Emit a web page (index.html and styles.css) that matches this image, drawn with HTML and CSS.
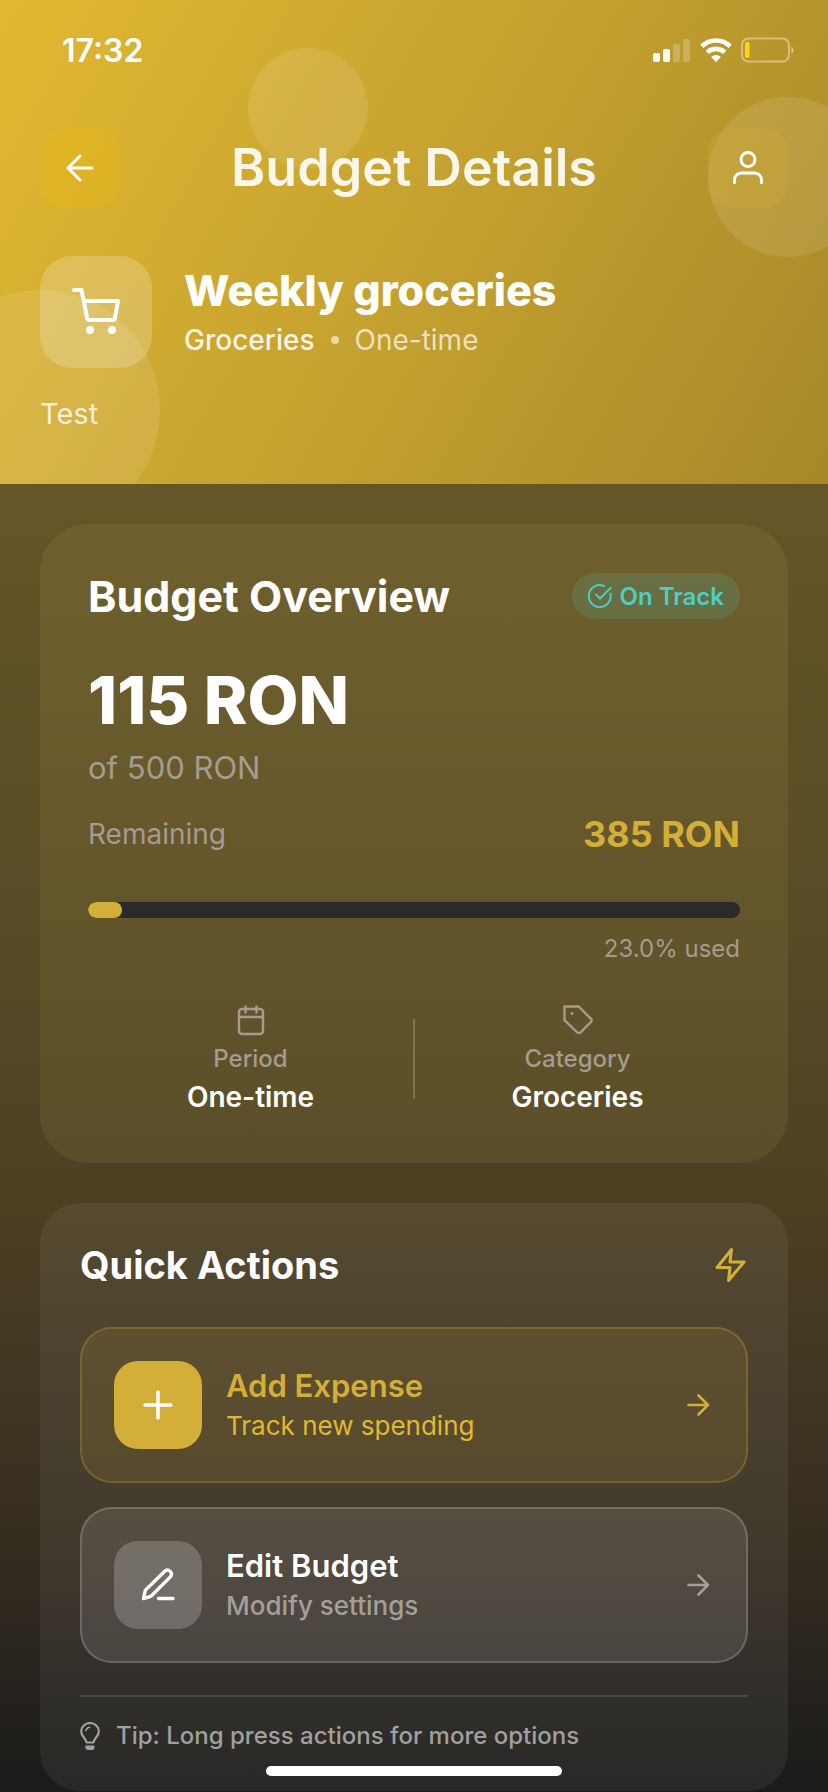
FILE: index.html
```html
<!DOCTYPE html>
<html lang="en">
<head>
<meta charset="utf-8">
<meta name="viewport" content="width=device-width, initial-scale=1">
<title>Budget Details</title>
<link rel="stylesheet" href="styles.css">
</head>
<body>
<header class="hero">
  <span class="bubble bubble-top"></span>
  <span class="bubble bubble-right"></span>
  <span class="bubble bubble-left"></span>
  <div class="status">
    <time class="clock">17:32</time>
    <div class="status-icons">
      <svg width="38" height="26" viewBox="0 0 38 26" fill="#fff"><rect x="0" y="16" width="7" height="9" rx="2"/><rect x="10" y="12" width="7" height="13" rx="2"/><rect x="20" y="7" width="7" height="18" rx="2" opacity=".22"/><rect x="30" y="2" width="7" height="23" rx="2" opacity=".22"/></svg>
      <svg width="32" height="26" viewBox="0 0 32 26"><g fill="none" stroke="#fff" stroke-width="4.6"><path d="M1.8 9.4a20.2 20.2 0 0 1 28.4 0"/><path d="M7.3 15.4a12.6 12.6 0 0 1 17.4 0"/></g><path fill="#fff" d="M16 25l-4.9-5a7.2 7.2 0 0 1 9.8 0z"/></svg>
      <svg width="54" height="26" viewBox="0 0 54 26"><rect x="1" y="1.500" width="47" height="23" rx="6.500" fill="none" stroke="#fff" stroke-opacity=".4" stroke-width="2"/><rect x="4" y="5" width="4.500" height="16" rx="1.800" fill="#ffd60a"/><path d="M50.500 9.500a4.600 4.600 0 0 1 0 7.500z" fill="#fff" opacity=".5"/></svg>
    </div>
  </div>
  <nav class="nav">
    <button class="nav-btn" type="button" aria-label="Back">
      <svg width="40" height="40" viewBox="0 0 40 40" fill="none" stroke="currentColor" stroke-width="3" stroke-linecap="round" stroke-linejoin="round"><path d="M32 20H8M20 32L8 20L20 8"/></svg>
    </button>
    <h1 class="title">Budget Details</h1>
    <button class="nav-btn nav-btn-soft" type="button" aria-label="Profile">
      <svg width="40" height="40" viewBox="0 0 40 40" fill="none" stroke="currentColor" stroke-width="3" stroke-linecap="round" stroke-linejoin="round"><circle cx="20" cy="11.500" r="7"/><path d="M6.500 34.500V32a7 7 0 0 1 7-7H26.500a7 7 0 0 1 7 7v2.500"/></svg>
    </button>
  </nav>
  <div class="budget">
    <div class="budget-icon">
      <svg width="56" height="56" viewBox="0 0 56 56" fill="none" stroke="#fff" stroke-width="4" stroke-linecap="round" stroke-linejoin="round"><path d="M6 6h7.500l5.700 28.500a2 2 0 0 0 2 1.500h23.600a2 2 0 0 0 2-1.600L50 17H15.500"/><g fill="#fff" stroke="none"><circle cx="22" cy="46" r="4"/><circle cx="44" cy="46" r="4"/></g></svg>
    </div>
    <div class="budget-text">
      <h2 class="budget-name">Weekly groceries</h2>
      <div class="meta"><span class="meta-cat">Groceries</span><span class="dot"></span><span class="meta-period">One-time</span></div>
    </div>
  </div>
  <p class="note">Test</p>
</header>
<main class="content">
  <section class="card overview">
    <div class="row">
      <h2 class="heading">Budget Overview</h2>
      <span class="badge"><svg width="24" height="24" viewBox="0 0 24 24" fill="none" stroke="currentColor" stroke-width="2" stroke-linecap="round" stroke-linejoin="round"><path d="M22.500 9.800A11 11 0 1 1 16 2M8 10.500l4 4L22.500 4"/></svg>On Track</span>
    </div>
    <p class="amount">115 RON</p>
    <p class="total">of 500 RON</p>
    <div class="row remaining"><span class="remaining-label">Remaining</span><strong class="remaining-value">385 RON</strong></div>
    <div class="bar" role="progressbar" aria-valuenow="23" aria-valuemin="0" aria-valuemax="100" aria-label="Budget used"><div class="bar-fill" style="width:5.2%"></div></div>
    <p class="used">23.0% used</p>
    <div class="stats">
      <div class="stat">
        <svg width="36" height="36" viewBox="0 0 36 36" fill="none" stroke="currentColor" stroke-width="2.400" stroke-linecap="round" stroke-linejoin="round"><rect x="6" y="7" width="24" height="25" rx="3"/><path d="M6 15h24M12.500 4.500v6M23.500 4.500v6"/></svg>
        <span class="stat-label">Period</span><span class="stat-value">One-time</span>
      </div>
      <span class="rule"></span>
      <div class="stat">
        <svg width="36" height="36" viewBox="0 0 36 36" fill="none" stroke="currentColor" stroke-width="2.400" stroke-linecap="round" stroke-linejoin="round"><path d="M4.500 4.500h14.200L30.800 16.600a2.600 2.600 0 0 1 0 3.600L20.600 30.300a2.400 2.400 0 0 1-3.400 0L4.500 18.200z"/><circle cx="12" cy="11.500" r="1.500" fill="currentColor" stroke="none"/></svg>
        <span class="stat-label">Category</span><span class="stat-value">Groceries</span>
      </div>
    </div>
  </section>
  <section class="card actions">
    <div class="row">
      <h2 class="heading heading-small">Quick Actions</h2>
      <svg class="zap" width="36" height="36" viewBox="0 0 36 36" fill="none" stroke="currentColor" stroke-width="3" stroke-linecap="round" stroke-linejoin="round"><path d="M19.500 2.500L5 20.500h13L16.500 33.500L32 15H18z"/></svg>
    </div>
    <div class="list">
      <button class="action action-gold" type="button">
        <span class="action-icon"><svg width="40" height="40" viewBox="0 0 40 40" fill="none" stroke="#fff" stroke-width="3.500" stroke-linecap="round"><path d="M20 7v26M7 20h26"/></svg></span>
        <span class="action-text"><span class="action-name">Add Expense</span><span class="action-sub">Track new spending</span></span>
        <svg width="32" height="32" viewBox="0 0 32 32" fill="none" stroke="currentColor" stroke-width="2.600" stroke-linecap="round" stroke-linejoin="round"><path d="M6.500 16h19.500M16.500 6.500L26 16l-9.500 9.500"/></svg>
      </button>
      <button class="action action-plain" type="button">
        <span class="action-icon"><svg width="40" height="40" viewBox="0 0 40 40" fill="none" stroke="#fff" stroke-width="3.400" stroke-linecap="round" stroke-linejoin="round"><path d="M20.500 33.500H35M5.500 33.500l1.600-7.400a3 3 0 0 1 .8-1.500L27 6a4 4 0 0 1 5.600 5.600L13.500 30.700a3 3 0 0 1-1.500.9z"/></svg></span>
        <span class="action-text"><span class="action-name">Edit Budget</span><span class="action-sub">Modify settings</span></span>
        <svg width="32" height="32" viewBox="0 0 32 32" fill="none" stroke="currentColor" stroke-width="2.600" stroke-linecap="round" stroke-linejoin="round"><path d="M6.500 16h19.500M16.500 6.500L26 16l-9.500 9.500"/></svg>
      </button>
    </div>
    <p class="tip"><svg width="20" height="28" viewBox="0 0 20 28" fill="none" stroke="currentColor" stroke-width="2.200" stroke-linecap="round" stroke-linejoin="round"><path d="M6.500 20.500C6 16 1.200 14.500 1.200 9.500a8.800 8.500 0 0 1 17.600 0C18.800 14.500 14 16 13.500 20.500z"/><path d="M6 8.500a4 4 0 0 1 3.500-3.200" stroke-width="1.500"/><path d="M6 24h8v2a1.500 1.500 0 0 1-1.500 1.500h-5A1.500 1.500 0 0 1 6 26z" fill="currentColor" stroke-width="1"/></svg>Tip: Long press actions for more options</p>
  </section>
</main>
<div class="home-bar"></div>
</body>
</html>
```

FILE: styles.css
```css
* {
  box-sizing: border-box;
}

body {
  margin: 0;
  min-height: 100vh;
  font-family: Inter, "Liberation Sans", sans-serif;
  color: #fff;
  background: linear-gradient(180deg, #6d5d2b 0%, #645627 28%, #594b25 50%, #4d4123 66%, #382f20 84%, #1b1b1b 100%);
}

h1,
h2,
p {
  margin: 0;
}

svg {
  display: block;
  flex: none;
}

button {
  font: inherit;
  color: inherit;
  border: 0;
  padding: 0;
  cursor: pointer;
}

/* Header */
.hero {
  position: relative;
  overflow: hidden;
  padding: 0 40px 48px;
  background: linear-gradient(120deg, #e2b832 0%, #c5a22f 50%, #a68829 100%);
}

.hero > * {
  position: relative;
}

.hero > .bubble {
  position: absolute;
  border-radius: 50%;
  background: rgba(255, 255, 255, 0.1);
}

.bubble-top {
  width: 120px;
  height: 120px;
  left: 30%;
  top: 48px;
}

.bubble-right {
  width: 160px;
  height: 160px;
  right: -40px;
  top: 97px;
}

.bubble-left {
  width: 240px;
  height: 240px;
  left: -80px;
  bottom: -46px;
}

.status {
  height: 100px;
  padding: 0 0 0 22px;
  display: flex;
  align-items: center;
  justify-content: space-between;
}

.clock {
  font-size: 32px;
  font-weight: 600;
}

.status-icons {
  display: flex;
  gap: 9px;
  margin-right: -7px;
}

.nav {
  margin-top: 28px;
  display: flex;
  align-items: center;
  justify-content: space-between;
}

.nav-btn {
  width: 80px;
  height: 80px;
  border-radius: 24px;
  display: grid;
  place-items: center;
  background: rgba(228, 184, 24, 0.45);
}

.nav-btn-soft {
  background: rgba(220, 180, 50, 0.2);
}

.title {
  font-size: 52px;
  line-height: 64px;
  font-weight: 600;
  color: rgba(255, 255, 255, 0.9);
}

.budget {
  margin-top: 48px;
  display: flex;
  align-items: center;
  gap: 32px;
}

.budget-icon {
  width: 112px;
  height: 112px;
  border-radius: 32px;
  display: grid;
  place-items: center;
  background: rgba(255, 255, 255, 0.2);
}

.budget-text {
  display: grid;
  gap: 8px;
}

.budget-name {
  font-size: 43px;
  line-height: 48px;
  font-weight: 800;
}

.meta {
  display: flex;
  align-items: center;
  gap: 16px;
  font-size: 28px;
  line-height: 36px;
}

.meta-cat {
  font-weight: 500;
  color: rgba(255, 255, 255, 0.9);
}

.dot {
  width: 8px;
  height: 8px;
  border-radius: 50%;
  background: rgba(255, 255, 255, 0.6);
}

.meta-period {
  color: rgba(255, 255, 255, 0.7);
}

.note {
  margin-top: 24px;
  font-size: 29px;
  line-height: 44px;
  color: rgba(255, 255, 255, 0.8);
}

/* Cards */
.content {
  padding: 40px 40px 1px;
  display: grid;
  gap: 40px;
}

.overview {
  padding: 48px;
  border-radius: 48px;
  background: rgba(255, 235, 130, 0.07);
}

.actions {
  padding: 40px;
  border-radius: 40px;
  background: rgba(255, 255, 255, 0.06);
}

.row {
  display: flex;
  align-items: center;
  justify-content: space-between;
}

.heading {
  font-size: 43px;
  line-height: 48px;
  font-weight: 700;
}

.heading-small {
  font-size: 38px;
  line-height: 44px;
}

.badge {
  display: flex;
  align-items: center;
  gap: 8px;
  height: 46px;
  padding: 0 16px;
  border-radius: 24px;
  font-size: 24px;
  font-weight: 600;
  color: #4ecdc4;
  background: rgba(78, 205, 196, 0.15);
}

.amount {
  margin-top: 44px;
  font-size: 66px;
  line-height: 72px;
  font-weight: 800;
}

.total {
  margin-top: 12px;
  font-size: 31px;
  line-height: 40px;
  color: #a39c90;
}

.remaining {
  margin-top: 24px;
}

.remaining-label {
  font-size: 28px;
  line-height: 44px;
  color: #a39c90;
}

.remaining-value {
  font-size: 36px;
  line-height: 44px;
  font-weight: 700;
  color: #d4af37;
}

.bar {
  margin-top: 46px;
  height: 16px;
  border-radius: 8px;
  overflow: hidden;
  background: #2a2a2a;
}

.bar-fill {
  height: 100%;
  border-radius: 8px;
  background: #d4af37;
}

.used {
  margin-top: 16px;
  font-size: 24px;
  line-height: 30px;
  text-align: right;
  color: #a39c90;
}

.stats {
  margin-top: 38px;
  display: flex;
  align-items: center;
}

.stat {
  flex: 1;
  display: flex;
  flex-direction: column;
  align-items: center;
  color: #a39c90;
}

.stat-label {
  margin: 6px 0 5px;
  font-size: 24px;
  line-height: 30px;
  font-weight: 500;
}

.stat-value {
  font-size: 28px;
  line-height: 36px;
  font-weight: 600;
  color: #fff;
}

.rule {
  width: 2px;
  height: 80px;
  background: rgba(255, 255, 255, 0.2);
}

.zap {
  color: #d4af37;
}

.list {
  margin-top: 40px;
  display: grid;
  gap: 24px;
}

.action {
  display: flex;
  align-items: center;
  gap: 24px;
  padding: 32px;
  border: 2px solid;
  border-radius: 32px;
  text-align: left;
}

.action-gold {
  color: #d4af37;
  background: rgba(212, 175, 55, 0.12);
  border-color: rgba(212, 175, 55, 0.25);
}

.action-plain {
  color: #a3a09a;
  background: rgba(255, 255, 255, 0.1);
  border-color: rgba(255, 255, 255, 0.18);
}

.action-icon {
  width: 88px;
  height: 88px;
  border-radius: 24px;
  display: grid;
  place-items: center;
}

.action-gold .action-icon {
  background: #d4af37;
}

.action-plain .action-icon {
  background: rgba(255, 255, 255, 0.2);
}

.action-text {
  flex: 1;
  display: grid;
  gap: 2px;
}

.action-name {
  font-size: 31px;
  line-height: 40px;
  font-weight: 600;
}

.action-plain .action-name {
  color: #fff;
}

.action-sub {
  font-size: 26px;
  line-height: 36px;
}

.action-gold .action-sub {
  color: #e2b832;
}

.action-plain .action-sub {
  font-weight: 500;
}

.tip {
  margin-top: 32px;
  padding-top: 24px;
  border-top: 2px solid rgba(255, 255, 255, 0.1);
  display: flex;
  align-items: center;
  gap: 16px;
  font-size: 24px;
  line-height: 30px;
  font-weight: 500;
  color: #a0a09e;
}

.home-bar {
  position: fixed;
  left: 50%;
  bottom: 16px;
  width: 296px;
  height: 10px;
  margin-left: -148px;
  border-radius: 5px;
  background: #fff;
}
```
